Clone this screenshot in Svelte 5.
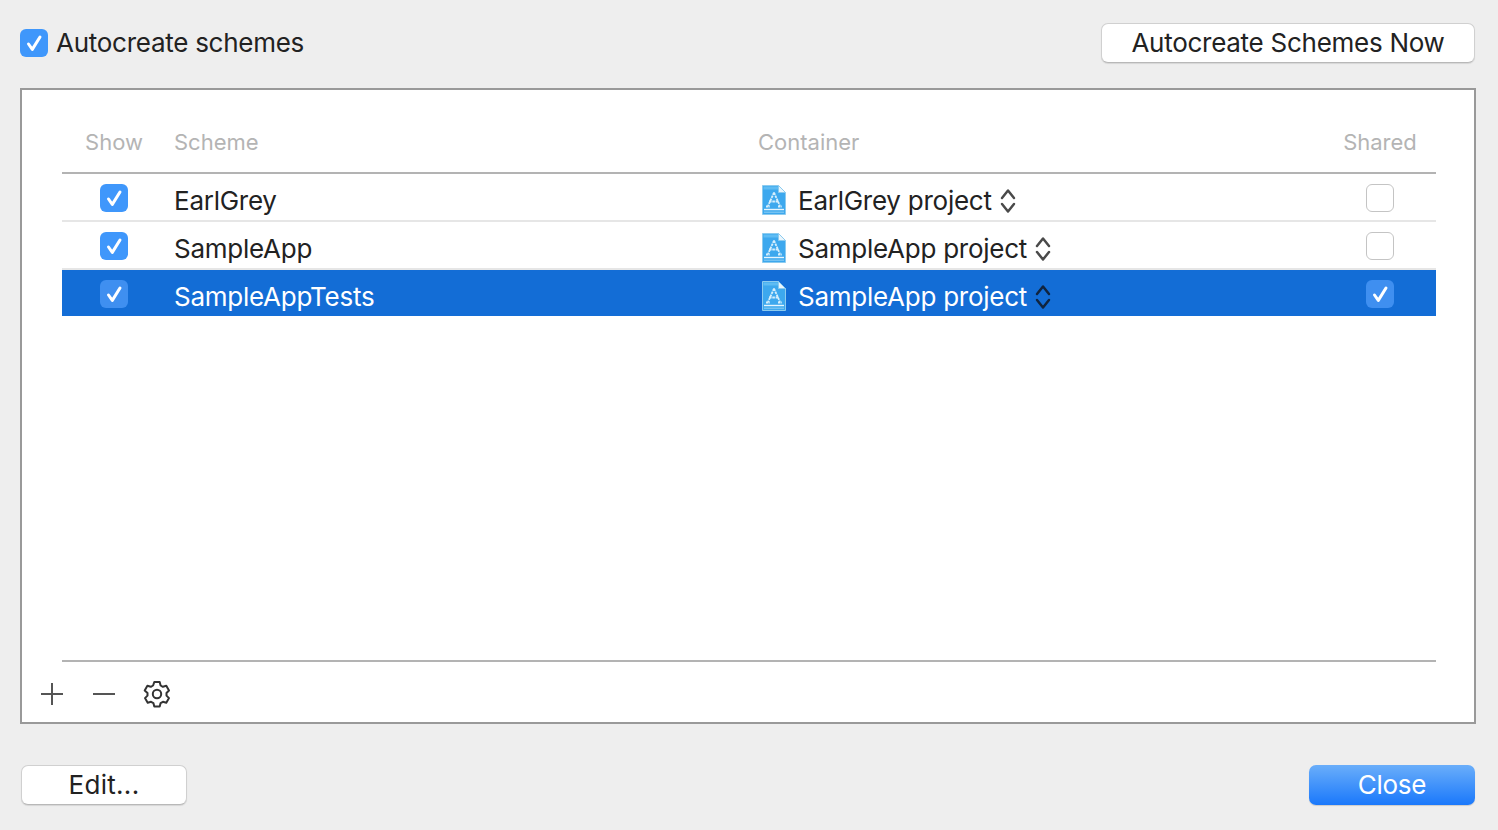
<script>
	let autocreate = $state(true);

	const schemes = [
		{ name: 'EarlGrey', container: 'EarlGrey project', show: true, shared: false, selected: false },
		{ name: 'SampleApp', container: 'SampleApp project', show: true, shared: false, selected: false },
		{ name: 'SampleAppTests', container: 'SampleApp project', show: true, shared: true, selected: true }
	];
</script>

{#snippet check(on)}
	<span class="check" class:on>
		{#if on}
			<svg viewBox="0 0 28 28" width="28" height="28">
				<path d="M8.5 15l3.8 5.4L20 8" fill="none" stroke="#fff" stroke-width="3" stroke-linecap="round" stroke-linejoin="round" />
			</svg>
		{/if}
	</span>
{/snippet}

{#snippet docIcon()}
	<svg class="doc" viewBox="0 0 26 32" width="26" height="32">
		<path d="M1.5 1.5h16l7 7v22h-23z" fill="#3da8ee" stroke="#8ccbef" />
		<path d="M2.5 2.5h14.5v3h-14.5z" fill="#5fbcf3" />
		<path d="M17.5 1.5v7h7z" fill="#e9f5fc" stroke="#8ccbef" />
		<path d="M3 25.5h20" stroke="#e6f5fe" stroke-width="1.4" />
		<path d="M3 28.2h20" stroke="#8fd0f5" stroke-width="1" />
		<path d="M13 8.5L7 22M13 8.5l6 13.5M8 17.5h10M5 22.5h4M17 22.5h4" fill="none" stroke="#d7effc" stroke-width="1.8" stroke-dasharray="2.6 0.7" />
	</svg>
{/snippet}

{#snippet stepper()}
	<svg class="stepper" viewBox="0 0 16 26" width="16" height="26">
		<path d="M2 10l6-7.5 6 7.5M2 16l6 7.5 6-7.5" fill="none" stroke="currentColor" stroke-width="2.5" stroke-linecap="round" stroke-linejoin="round" />
	</svg>
{/snippet}

<div class="window">
	<header class="top">
		<label class="auto">
			{@render check(autocreate)}
			<span class="label">Autocreate schemes</span>
		</label>
		<button class="btn wide">Autocreate Schemes Now</button>
	</header>

	<section class="panel">
		<div class="table">
			<div class="row head">
				<span class="show">Show</span>
				<span>Scheme</span>
				<span>Container</span>
				<span class="shared">Shared</span>
			</div>
			{#each schemes as s}
				<div class="row body" class:selected={s.selected}>
					<span class="show">{@render check(s.show)}</span>
					<span class="name">{s.name}</span>
					<span class="container">
						{@render docIcon()}
						<span class="name">{s.container}</span>
						{@render stepper()}
					</span>
					<span class="shared">{@render check(s.shared)}</span>
				</div>
			{/each}
		</div>

		<div class="tools">
			<svg viewBox="0 0 24 24" width="24" height="24"><path d="M12 1v22M1 12h22" stroke="#555" stroke-width="2" /></svg>
			<svg viewBox="0 0 24 24" width="24" height="24"><path d="M1 12h22" stroke="#555" stroke-width="2" /></svg>
			<svg class="gear" viewBox="0 0 28 28" width="28" height="28">
				<path
					d="M11.3 2h5.4l.9 3.5 2.3 1.3 3.4-1 2.7 4.7-2.5 2.5v2.6l2.5 2.5-2.7 4.7-3.4-1-2.3 1.3-.9 3.5h-5.4l-.9-3.5-2.3-1.3-3.4 1-2.7-4.7 2.5-2.5v-2.6L1.7 10.5l2.7-4.7 3.4 1 2.3-1.3z"
					fill="none" stroke="#333" stroke-width="2" stroke-linejoin="round"
				/>
				<circle cx="14" cy="14" r="4.2" fill="none" stroke="#333" stroke-width="2" />
			</svg>
		</div>
	</section>

	<footer class="bottom">
		<button class="btn edit">Edit...</button>
		<button class="btn primary">Close</button>
	</footer>
</div>

<style>
	:global(body) {
		background: #eeeeee;
		font-family: Inter, 'Liberation Sans', sans-serif;
		color: #222;
	}

	.window {
		width: 1498px;
		height: 830px;
		box-sizing: border-box;
		padding: 23px 22px 25px 20px;
		display: flex;
		flex-direction: column;
	}

	.top {
		display: flex;
		align-items: center;
		justify-content: space-between;
		height: 40px;
		margin-bottom: 25px;
	}

	.auto {
		display: flex;
		align-items: center;
		gap: 8px;
		font-size: 26px;
		letter-spacing: -0.27px;
	}

	.label {
		padding-bottom: 2px;
	}

	.check {
		display: block;
		width: 28px;
		height: 28px;
		box-sizing: border-box;
		background: #fff;
		border: 1.5px solid #c4c4c4;
		border-radius: 6px;
	}

	.check.on {
		background: #3f97fb;
		border: none;
	}

	.check svg {
		display: block;
	}

	.btn {
		height: 40px;
		box-sizing: border-box;
		font: inherit;
		font-size: 26px;
		letter-spacing: -0.27px;
		color: #222;
		background: #fff;
		border: 1px solid #d0d0d0;
		border-bottom-color: #b8b8b8;
		border-radius: 7px;
		box-shadow: 0 1px 1px rgba(0, 0, 0, 0.1);
		padding: 0 0 2px;
	}

	.wide {
		width: 374px;
		margin-right: 1px;
	}

	.panel {
		flex: 1;
		box-sizing: border-box;
		background: #fff;
		border: 2px solid #999;
		display: flex;
		flex-direction: column;
		padding: 0 38px 0 40px;
	}

	.table {
		flex: 1;
		border-bottom: 2px solid #b3b3b3;
	}

	.row {
		display: grid;
		grid-template-columns: 104px 592px 1fr 112px;
		align-items: center;
	}

	.row > :nth-child(2) {
		margin-left: 8px;
	}

	.head {
		height: 60px;
		padding-top: 22px;
		border-bottom: 2px solid #b3b3b3;
		font-size: 22px;
		color: #b4b4b4;
	}

	.body {
		height: 46px;
		border-bottom: 2px solid #e6e6e6;
		font-size: 26px;
		letter-spacing: -0.25px;
	}

	.body:last-child {
		border-bottom: none;
	}

	.selected {
		background: #136dd6;
		color: #fff;
	}

	.show,
	.shared {
		display: flex;
		justify-content: center;
	}

	.body .show,
	.body .shared {
		padding-top: 2px;
	}

	.name {
		position: relative;
		top: 3px;
	}

	.container {
		display: flex;
		align-items: center;
	}

	.doc {
		margin: 6px 11px 0 3px;
		flex-shrink: 0;
	}

	.stepper {
		margin: 8px 0 0 8px;
		color: #4a4a4a;
	}

	.selected .stepper {
		color: #10243f;
	}

	.selected .check.on {
		background: #3f8ff0;
	}

	.tools {
		height: 60px;
		box-sizing: border-box;
		padding-top: 4px;
		display: flex;
		align-items: center;
		gap: 28px;
		margin-left: -22px;
	}

	.tools .gear {
		margin-left: -1px;
	}

	.bottom {
		display: flex;
		justify-content: space-between;
		margin-top: 41px;
		padding: 0 1px;
	}

	.edit {
		width: 166px;
		letter-spacing: 0.3px;
	}

	.primary {
		width: 166px;
		color: #fff;
		border: none;
		background: linear-gradient(#6aaefa, #1a78fb);
		box-shadow: 0 1px 1px rgba(0, 0, 0, 0.15);
	}
</style>
